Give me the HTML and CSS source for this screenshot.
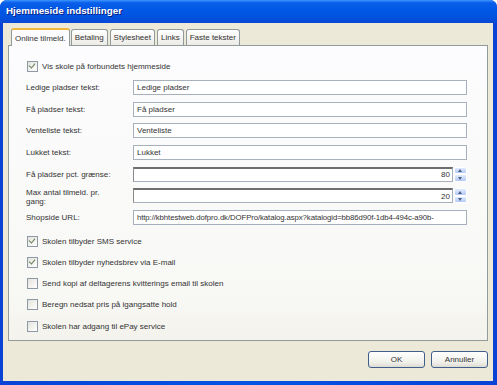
FILE: index.html
```html
<!DOCTYPE html>
<html lang="da">
<head>
    <meta charset="UTF-8">
    <title>Hjemmeside indstillinger</title>
    <link rel="stylesheet" href="styles.css">
</head>
<body>

<div class="window">
    <div class="titlebar">
        <span class="title">Hjemmeside indstillinger</span>
    </div>
    <div class="frame">
        <div class="dialog">
            <div class="tabs">
                <div class="tab active">Online tilmeld.</div>
                <div class="tab">Betaling</div>
                <div class="tab">Stylesheet</div>
                <div class="tab">Links</div>
                <div class="tab">Faste tekster</div>
            </div>

            <div class="panel">
                <div class="check"><span class="box checked"></span>Vis skole på forbundets hjemmeside</div>

                <div class="fields">
                    <div class="field">
                        <span class="label">Ledige pladser tekst:</span>
                        <span class="input">Ledige pladser</span>
                    </div>
                    <div class="field">
                        <span class="label">Få pladser tekst:</span>
                        <span class="input">Få pladser</span>
                    </div>
                    <div class="field">
                        <span class="label">Venteliste tekst:</span>
                        <span class="input">Venteliste</span>
                    </div>
                    <div class="field">
                        <span class="label">Lukket tekst:</span>
                        <span class="input">Lukket</span>
                    </div>
                    <div class="field">
                        <span class="label">Få pladser pct. grænse:</span>
                        <div class="spin">
                            <span class="input num">80</span>
                            <span class="spin-btns"><span class="up"></span><span class="down"></span></span>
                        </div>
                    </div>
                    <div class="field">
                        <span class="label two">Max antal tilmeld. pr. gang:</span>
                        <div class="spin">
                            <span class="input num">20</span>
                            <span class="spin-btns"><span class="up"></span><span class="down"></span></span>
                        </div>
                    </div>
                    <div class="field">
                        <span class="label">Shopside URL:</span>
                        <span class="input url">http://kbhtestweb.dofpro.dk/DOFPro/katalog.aspx?katalogid=bb86d90f-1db4-494c-a90b-</span>
                    </div>
                </div>

                <div class="checks">
                    <div class="check"><span class="box checked"></span>Skolen tilbyder SMS service</div>
                    <div class="check"><span class="box checked"></span>Skolen tilbyder nyhedsbrev via E-mail</div>
                    <div class="check"><span class="box"></span>Send kopi af deltagerens kvitterings email til skolen</div>
                    <div class="check"><span class="box"></span>Beregn nedsat pris på igangsatte hold</div>
                    <div class="check"><span class="box"></span>Skolen har adgang til ePay service</div>
                </div>
            </div>

            <div class="buttons">
                <button class="btn">OK</button>
                <button class="btn">Annuller</button>
            </div>
        </div>
    </div>
</div>

</body>
</html>
```

FILE: styles.css
```css
body {
    margin: 0;
    padding: 0;
    background-color: #fff;
    font-family: 'Liberation Sans', Arial, sans-serif;
    font-size: 8px;
    color: #333;
}
.window {
    width: 497px;
    height: 385px;
    display: flex;
    flex-direction: column;
    background-color: #0A3FD0;
    border-radius: 7px 7px 0 0;
    overflow: hidden;
}
.titlebar {
    height: 23px;
    flex: none;
    display: flex;
    align-items: center;
    padding-left: 6px;
    background: linear-gradient(to bottom, #3D95FF 0%, #0A5FEA 12%, #0058E6 40%, #0054E0 70%, #0A48D6 100%);
}
.title {
    color: #fff;
    font-weight: bold;
    font-size: 9.8px;
    text-shadow: 1px 1px 0 #0A1E80;
    margin-top: -2px;
}
.frame {
    flex: 1;
    display: flex;
    padding: 0 4px 4px 3px;
    background: linear-gradient(to right, #0843D6, #0654E4 50%, #0843D6);
}
.dialog {
    flex: 1;
    background-color: #ECE9D8;
    padding: 4px 5px 0 5px;
    display: flex;
    flex-direction: column;
}
.tabs {
    display: flex;
    align-items: flex-end;
    height: 18px;
    padding-left: 3px;
    position: relative;
    z-index: 1;
}
.tab {
    height: 15px;
    padding: 0 3px;
    margin-right: 2px;
    display: flex;
    align-items: center;
    border: 1px solid #919B9C;
    border-bottom: none;
    border-radius: 3px 3px 0 0;
    background: linear-gradient(to bottom, #fff, #ECEBE6);
    color: #333;
    font-size: 8px;
}
.tab.active {
    height: 16px;
    margin-right: 1px;
    background: #FCFCFE;
    border-top: 2px solid #F0B73A;
    margin-bottom: -1px;
}
.panel {
    height: 296px;
    border: 1px solid #919B9C;
    background: linear-gradient(to bottom, #FCFCFE 0%, #F8F8F5 85%, #F3F2EC 100%);
    padding: 15px 20px 0 17px;
    box-sizing: border-box;
}
.check {
    display: flex;
    align-items: center;
    height: 10px;
    white-space: nowrap;
}
.box {
    width: 9px;
    height: 9px;
    border: 1px solid #8D9AA6;
    background: linear-gradient(135deg, #E4E3DC, #fff);
    margin: 0 4px 0 1px;
    flex: none;
    position: relative;
}
.box.checked::after {
    content: "";
    position: absolute;
    left: 2px;
    top: 0px;
    width: 3px;
    height: 5px;
    border: solid #6A7F5E;
    border-width: 0 1.3px 1.3px 0;
    transform: rotate(40deg);
}
.fields {
    display: flex;
    flex-direction: column;
    gap: 6.7px;
    margin-top: 9px;
}
.field {
    display: flex;
    align-items: center;
    height: 15px;
}
.label {
    width: 107px;
    flex: none;
    white-space: nowrap;
}
.label.two {
    white-space: normal;
    line-height: 9px;
    padding-right: 20px;
    box-sizing: border-box;
    margin-top: 3px;
}
.input {
    flex: 1;
    height: 15px;
    box-sizing: border-box;
    border: 1px solid #A7B1BD;
    background: #fff;
    padding: 0 3px;
    display: flex;
    align-items: center;
    white-space: nowrap;
    overflow: hidden;
}
.input.url {
    font-size: 7.8px;
    letter-spacing: -0.1px;
}
.spin {
    flex: 1;
    display: flex;
    align-items: center;
    height: 15px;
}
.input.num {
    justify-content: flex-end;
    border-top: 2px solid #6E6E6E;
    border-left: 1px solid #8A8A8A;
    padding-right: 2px;
}
.spin-btns {
    width: 13px;
    height: 15px;
    margin-left: 1px;
    display: flex;
    flex-direction: column;
    flex: none;
}
.spin-btns span {
    flex: 1;
    background: linear-gradient(to bottom, #E3ECFE, #B4C8F6);
    border: 1px solid #fff;
    border-radius: 2px;
    position: relative;
}
.spin-btns span::after {
    content: "";
    position: absolute;
    left: 3px;
    width: 0;
    height: 0;
    border-left: 2.5px solid transparent;
    border-right: 2.5px solid transparent;
}
.spin-btns .up::after {
    top: 1.5px;
    border-bottom: 3px solid #4D6185;
}
.spin-btns .down::after {
    top: 1.5px;
    border-top: 3px solid #4D6185;
}
.checks {
    display: flex;
    flex-direction: column;
    gap: 11.25px;
    margin-top: 11px;
}
.buttons {
    display: flex;
    justify-content: flex-end;
    gap: 6px;
    margin-top: 10px;
}
.btn {
    width: 57px;
    height: 17px;
    padding: 0;
    border: 1px solid #3F5F8A;
    border-radius: 3px;
    background: linear-gradient(to bottom, #fff, #F0F0EA 70%, #DCDBD3);
    font-family: 'Liberation Sans', Arial, sans-serif;
    font-size: 8px;
    color: #333;
}
```
